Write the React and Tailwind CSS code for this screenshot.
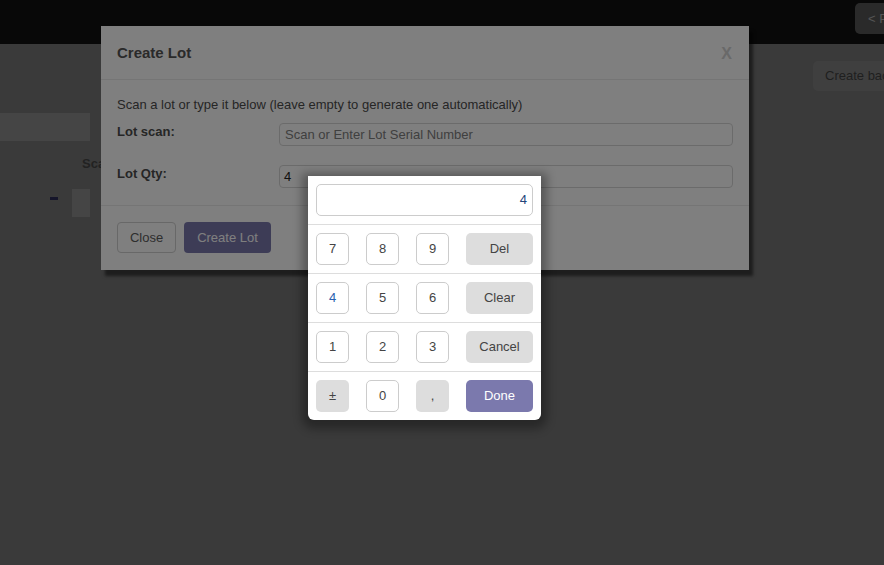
import React from 'react'

const KEY = 'w-[33px] h-8 rounded-[5px] border border-[#cccccc] bg-white flex items-center justify-center text-[13px] text-[#444]'
const GRAY = 'h-8 rounded-[5px] bg-[#dddddd] flex items-center justify-center text-[13px] text-[#444]'

function Key({children, className=''}){
  return <div className={`${KEY} ${className}`}>{children}</div>
}

function NumRow({children}){
  return (
    <div className="border-t border-[#dddddd] px-2 py-2 flex gap-[17px]">
      {children}
    </div>
  )
}

export default function App(){
  return (
    <div className="relative w-[884px] h-[565px] overflow-hidden bg-[#747474] font-['Liberation_Sans',Arial,sans-serif]">
      {/* page behind */}
      <header className="h-[44px] bg-[#101010] flex">
        <div className="ml-[855px] mt-[3px] h-[31px] shrink-0 whitespace-nowrap rounded-[5px] bg-[#555555] px-[13px] flex items-center text-[13px] text-[#aaaaaa]">&lt; Previous</div>
      </header>
      <main className="flex flex-col">
        <div className="flex">
          <div className="ml-[813px] mt-[17px] h-[30px] shrink-0 whitespace-nowrap rounded-[5px] bg-[#7f7f7f] px-[12px] flex items-center text-[13px] text-[#3e3e3e]">Create backorder</div>
        </div>
        <div className="mt-[22px] h-[28px] w-[90px] bg-[#8a8a8a]" />
        <div className="mt-[16px] pl-[82px] text-[13px] font-bold text-[#444] leading-[14px]">Scanned</div>
        <div className="mt-[18px] pl-[50px] flex items-start gap-[14px]">
          <span className="mt-[8px] w-[8px] h-[3px] bg-[#2a2a55]" />
          <div className="w-[18px] h-[28px] bg-[#8a8a8a]" />
        </div>
      </main>

      {/* modal */}
      <div className="absolute left-[101px] top-[26px] w-[648px] h-[244px] bg-white shadow-[4px_6px_3px_rgba(0,0,0,0.5)] flex flex-col text-[#4c4c4c]">
        <div className="h-[54px] border-b border-[#eaeaea] px-4 pt-[2px] flex items-center justify-between">
          <h4 className="text-[15px] font-bold text-[#555]">Create Lot</h4>
          <span className="text-[16px] font-bold text-[#d2d2d2] leading-none pr-[1px]">X</span>
        </div>
        <div className="px-4 pt-[16px] pb-[17px] text-[13px]">
          <div className="h-[18px] leading-[18px]">Scan a lot or type it below (leave empty to generate one automatically)</div>
          <div className="mt-[9px] flex">
            <label className="w-[162px] font-bold leading-[17px]">Lot scan:</label>
            <div className="flex-1 h-[23px] rounded-[4px] border border-[#d6d6d6] px-[5px] flex items-center text-[#808080]">Scan or Enter Lot Serial Number</div>
          </div>
          <div className="mt-[19px] flex">
            <label className="w-[162px] font-bold leading-[17px]">Lot Qty:</label>
            <div className="flex-1 h-[23px] rounded-[4px] border border-[#d6d6d6] px-[4px] flex items-center text-[#222]">4</div>
          </div>
        </div>
        <div className="border-t border-[#eaeaea] px-4 pt-4 flex gap-2">
          <button className="h-[31px] w-[59px] rounded-[4px] border border-[#d0d0d0] text-[13px] text-[#5c5c5c]">Close</button>
          <button className="h-[31px] w-[87px] rounded-[4px] bg-[#7b79ad] text-[13px] text-white">Create Lot</button>
        </div>
      </div>

      {/* backdrop */}
      <div className="absolute inset-0 bg-black/50" />

      {/* numpad */}
      <div className="absolute left-[308px] top-[176px] w-[233px] h-[244px] bg-white rounded-b-[6px] shadow-[0_3px_10px_6px_rgba(0,0,0,0.32)]">
        <div className="p-2">
          <div className="h-8 rounded-[5px] border border-[#cccccc] flex items-center justify-end pr-[5px] text-[13px] text-[#23457a]">4</div>
        </div>
        <NumRow>
          <Key>7</Key><Key>8</Key><Key>9</Key>
          <div className={`${GRAY} w-[67px]`}>Del</div>
        </NumRow>
        <NumRow>
          <Key className="!text-[#2a5fae]">4</Key><Key>5</Key><Key>6</Key>
          <div className={`${GRAY} w-[67px]`}>Clear</div>
        </NumRow>
        <NumRow>
          <Key>1</Key><Key>2</Key><Key>3</Key>
          <div className={`${GRAY} w-[67px]`}>Cancel</div>
        </NumRow>
        <NumRow>
          <div className={`${GRAY} w-[33px]`}>±</div>
          <Key>0</Key>
          <div className={`${GRAY} w-[33px]`}>,</div>
          <div className="w-[67px] h-8 rounded-[5px] bg-[#7b79ad] flex items-center justify-center text-[13px] text-white">Done</div>
        </NumRow>
      </div>
    </div>
  )
}
